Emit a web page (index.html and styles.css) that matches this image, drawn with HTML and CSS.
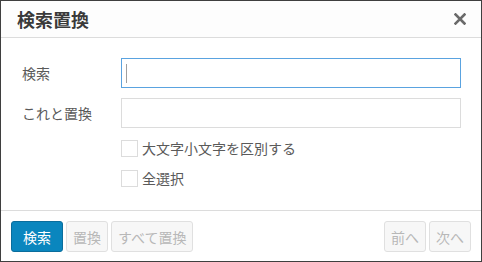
FILE: index.html
```html
<!DOCTYPE html>
<html lang="ja">
<head>
    <meta charset="UTF-8">
    <title>検索置換</title>
    <link rel="stylesheet" href="styles.css">
</head>
<body>
    <div class="dialog">
        <div class="dialog-head">
            <h1 class="dialog-title">検索置換</h1>
            <button class="close-btn" aria-label="閉じる">
                <svg width="12" height="12" viewBox="0 0 12 12">
                    <path d="M1.5 1.5 L10.5 10.5 M10.5 1.5 L1.5 10.5" stroke="#6a6a6a" stroke-width="2.6" stroke-linecap="square"/>
                </svg>
            </button>
        </div>

        <div class="dialog-body">
            <div class="form-row">
                <label class="form-label">検索</label>
                <div class="field focused">
                    <input type="text" class="text-input">
                    <span class="caret"></span>
                </div>
            </div>
            <div class="form-row">
                <label class="form-label">これと置換</label>
                <div class="field">
                    <input type="text" class="text-input">
                </div>
            </div>
            <div class="check-row">
                <span class="check-box"></span>
                <span class="check-text">大文字小文字を区別する</span>
            </div>
            <div class="check-row">
                <span class="check-box"></span>
                <span class="check-text">全選択</span>
            </div>
        </div>

        <div class="dialog-foot">
            <div class="btn-group">
                <button class="btn primary">検索</button>
                <button class="btn" disabled>置換</button>
                <button class="btn" disabled>すべて置換</button>
            </div>
            <div class="btn-group">
                <button class="btn" disabled>前へ</button>
                <button class="btn" disabled>次へ</button>
            </div>
        </div>
    </div>
</body>
</html>
```

FILE: styles.css
```css
* {
    margin: 0;
    padding: 0;
    box-sizing: border-box;
}

body {
    font-family: "Noto Sans CJK JP", "Noto Sans", sans-serif;
    background: #fff;
    width: 482px;
    height: 262px;
}

.dialog {
    width: 482px;
    height: 262px;
    border: 1px solid #3f3f3f;
    background: #fff;
    display: flex;
    flex-direction: column;
}

.dialog-head {
    height: 37px;
    background: #fdfdfd;
    border-bottom: 1px solid #dcdcdc;
    display: flex;
    align-items: center;
    justify-content: space-between;
    padding: 0 13px 0 16px;
}

.dialog-title {
    font-size: 18px;
    font-weight: 700;
    color: #3a3a3a;
    line-height: 20px;
}

.close-btn {
    border: none;
    background: none;
    width: 16px;
    height: 16px;
    display: flex;
    align-items: center;
    justify-content: center;
}

.dialog-body {
    flex: 1;
    padding: 20px 20px 0 20px;
    display: flex;
    flex-direction: column;
    gap: 10px;
}

.form-row {
    display: flex;
    align-items: center;
    height: 30px;
}

.form-label {
    width: 100px;
    font-size: 14px;
    color: #5a5a5a;
    padding-left: 1px;
}

.field {
    flex: 1;
    height: 30px;
    position: relative;
}

.text-input {
    width: 100%;
    height: 30px;
    border: 1px solid #dcdcdc;
    background: #fff;
    outline: none;
    caret-color: transparent;
}

.field.focused .text-input {
    border-color: #5aa3e0;
}

.caret {
    position: absolute;
    left: 5px;
    top: 6px;
    width: 1px;
    height: 19px;
    background: #a0a0a0;
}

.check-row {
    display: flex;
    align-items: center;
    height: 20px;
    margin-left: 100px;
    gap: 4px;
}

.check-box {
    width: 17px;
    height: 17px;
    border: 1px solid #dcdcdc;
    background: #fff;
}

.check-text {
    font-size: 14px;
    color: #5a5a5a;
    line-height: 20px;
}

.dialog-foot {
    height: 51px;
    border-top: 1px solid #dcdcdc;
    display: flex;
    justify-content: space-between;
    padding: 10px 10px 0 10px;
}

.btn-group {
    display: flex;
    gap: 3px;
    height: 31px;
}

.btn {
    font-family: inherit;
    font-size: 14px;
    height: 31px;
    padding: 0 6px;
    border: 1px solid #e0e0e0;
    border-radius: 3px;
    background: #f7f7f7;
    color: #b8b8b8;
}

.btn.primary {
    background: #0a86be;
    border-color: #0a6d9c;
    color: #fff;
    padding: 0 11px;
}
```
